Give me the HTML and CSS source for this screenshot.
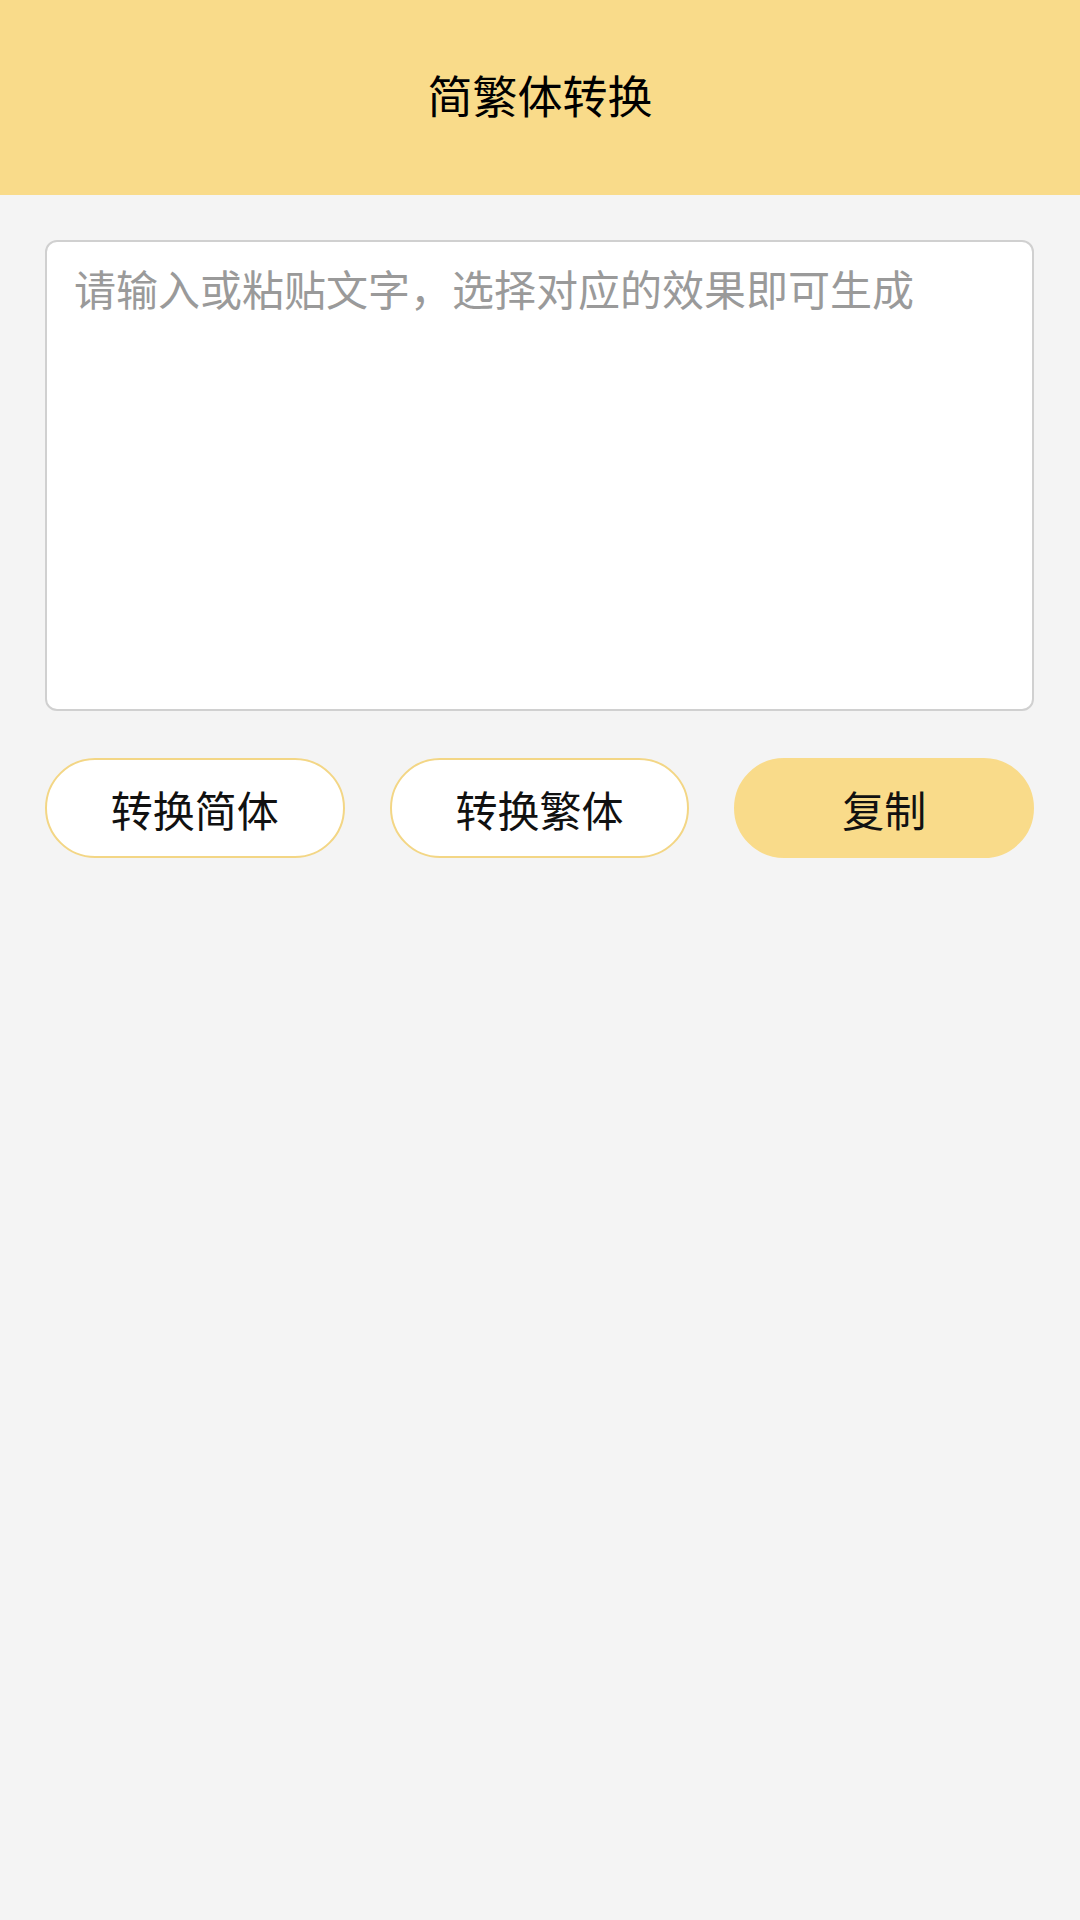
FILE: index.html
```html
<!DOCTYPE html>
<html lang="zh-CN">
<head>
<meta charset="utf-8">
<title>简繁体转换</title>
<link rel="stylesheet" href="styles.css">
</head>
<body>
<header class="header"><h1 class="title">简繁体转换</h1></header>
<main class="main">
  <textarea class="input" placeholder="请输入或粘贴文字，选择对应的效果即可生成"></textarea>
  <div class="actions">
    <button class="btn btn-outline">转换简体</button>
    <button class="btn btn-outline">转换繁体</button>
    <button class="btn btn-fill">复制</button>
  </div>
</main>
</body>
</html>
```
FILE: styles.css
```css
* { box-sizing: border-box; }
html, body { margin: 0; padding: 0; }
body {
  width: 1080px;
  min-height: 1920px;
  background: #f4f4f4;
  font-family: "Noto Sans CJK SC", "Noto Sans", sans-serif;
}
.header {
  height: 195px;
  background: #f9db8a;
  display: flex;
  align-items: center;
  justify-content: center;
}
.title {
  margin: 0 0 6px 0;
  font-size: 45px;
  font-weight: 400;
  color: #000;
  line-height: 1;
}
.main {
  padding: 45px 46px 0 45px;
  display: flex;
  flex-direction: column;
  gap: 47px;
}
.input {
  display: block;
  width: 100%;
  height: 471px;
  border: 2px solid #d0d0d0;
  border-radius: 12px;
  background: #fff;
  padding: 17px 27px;
  font-family: inherit;
  font-size: 42px;
  line-height: 1.4;
  color: #333;
  resize: none;
  outline: none;
}
.input::placeholder { color: #9a9a9a; }
.actions {
  display: flex;
  gap: 45px;
}
.btn {
  flex: 1;
  height: 100px;
  border-radius: 50px;
  font-family: inherit;
  font-size: 42px;
  color: #111;
  display: flex;
  align-items: center;
  justify-content: center;
  padding: 0;
}
.btn-outline {
  background: #fff;
  border: 2px solid #f3d685;
}
.btn-fill {
  background: #f9db8a;
  border: 2px solid #f9db8a;
}
```
